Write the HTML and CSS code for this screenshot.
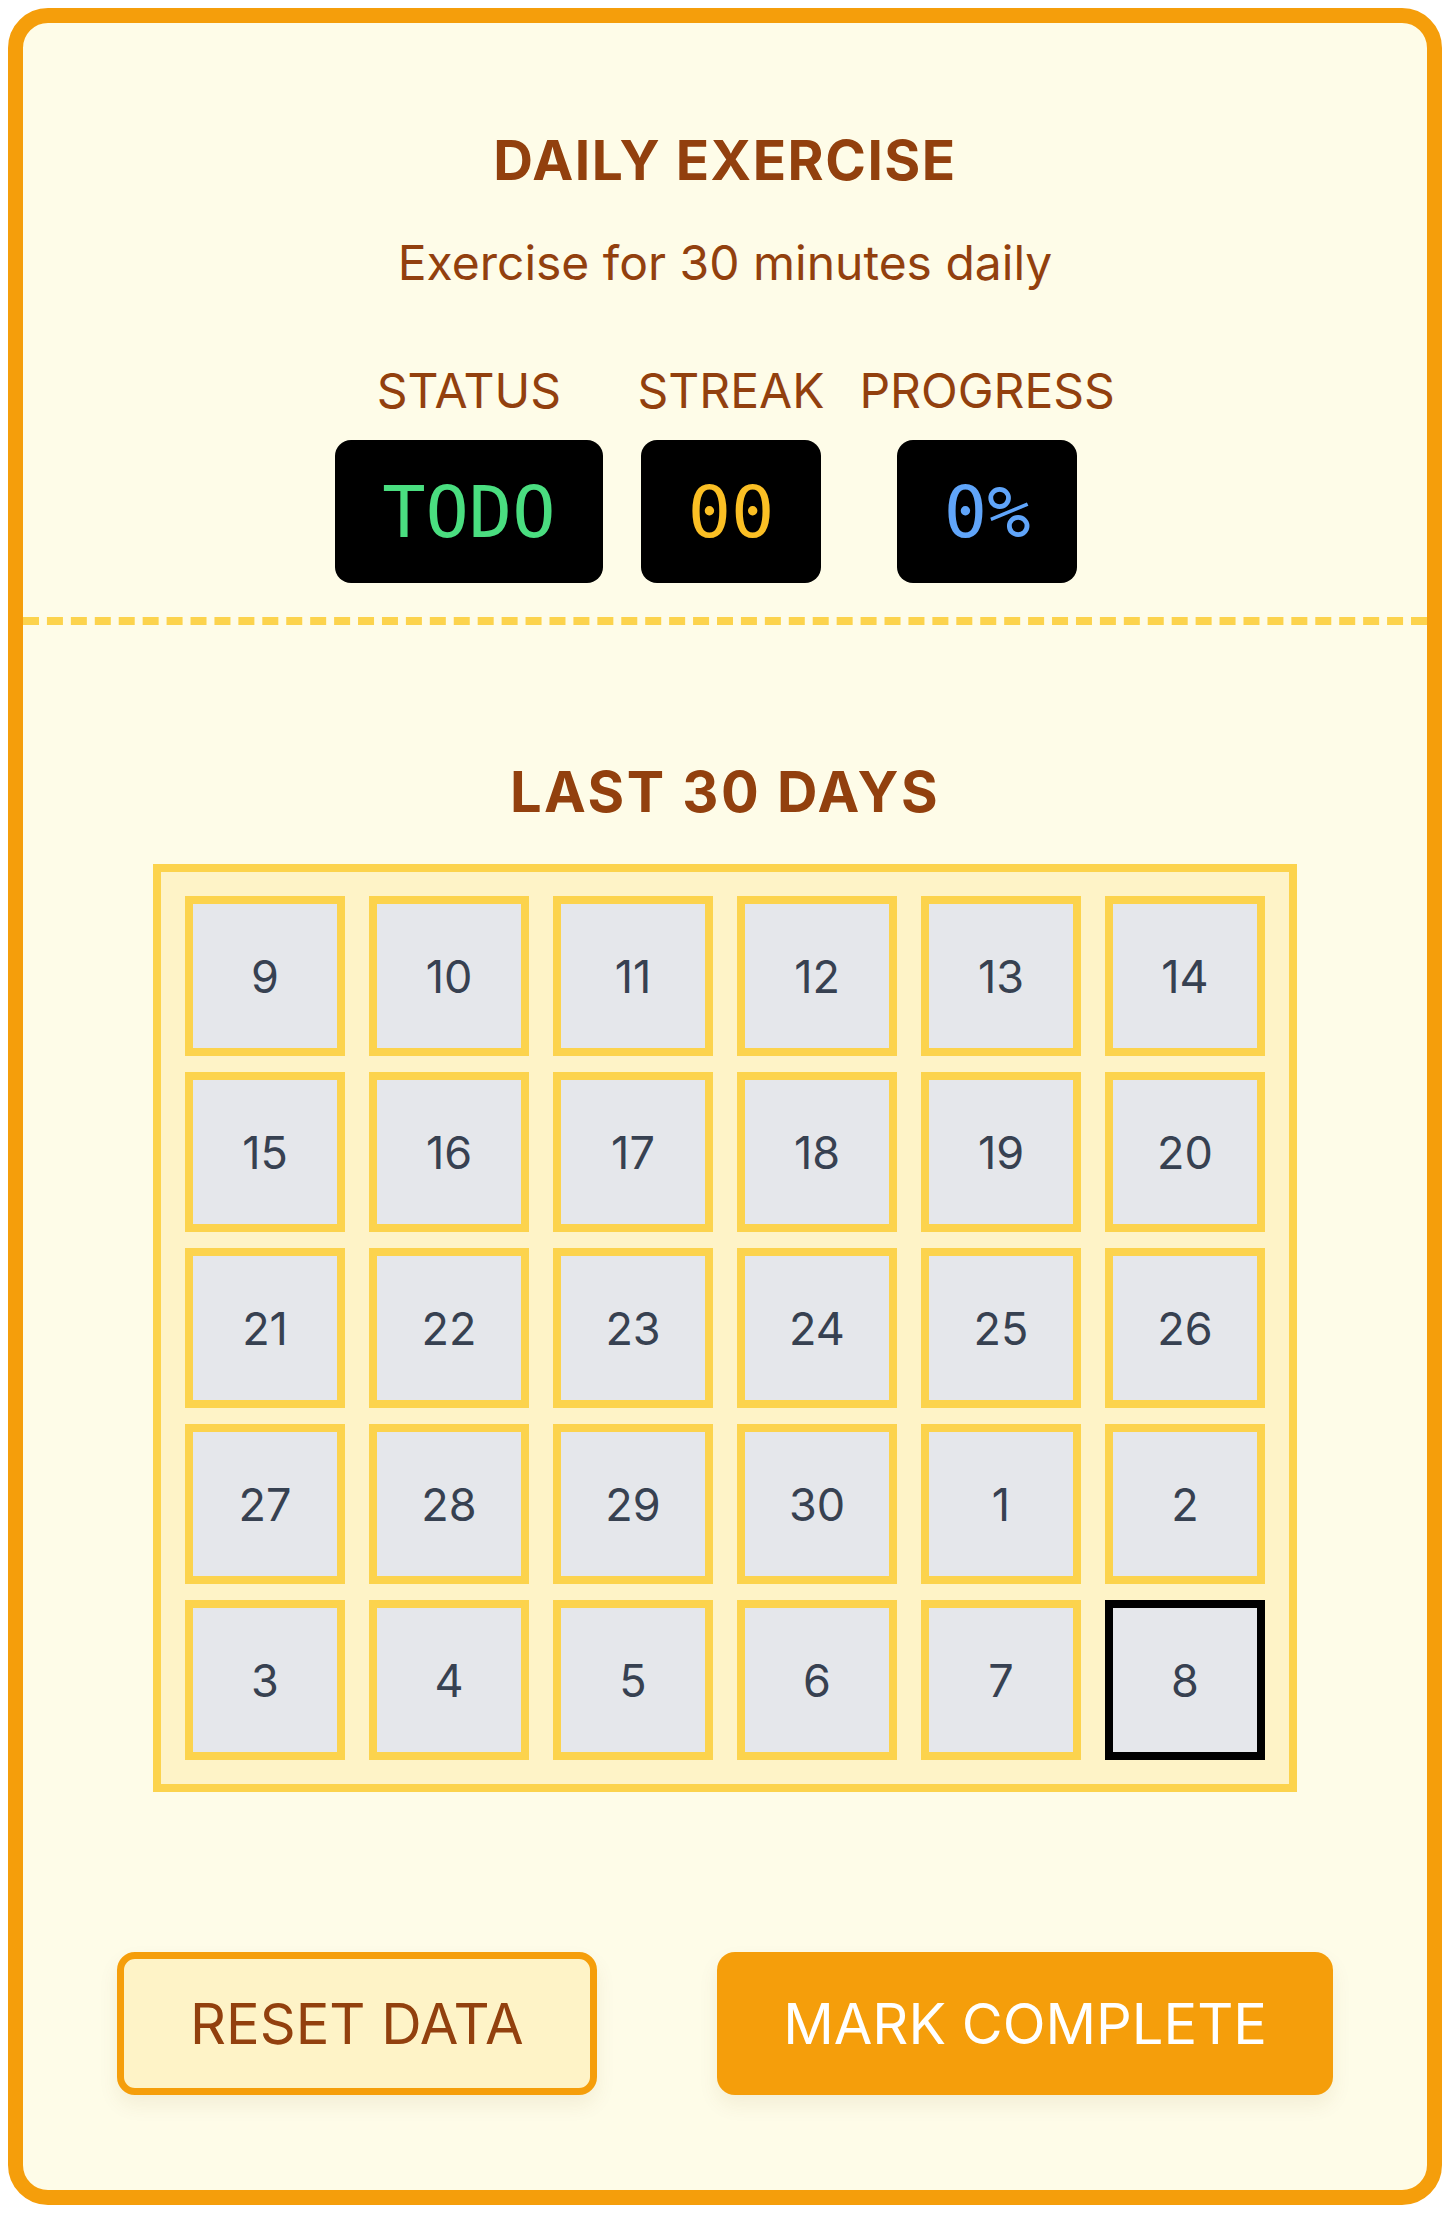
FILE: index.html
```html
<!DOCTYPE html>
<html lang="en">
<head>
<meta charset="utf-8">
<title>Daily Exercise</title>
<link rel="stylesheet" href="styles.css">
</head>
<body>
<div class="card">
  <header class="header">
    <h1 class="title">DAILY EXERCISE</h1>
    <p class="subtitle">Exercise for 30 minutes daily</p>
    <div class="stats">
      <div class="stat">
        <div class="stat-label">STATUS</div>
        <div class="stat-box status">TODO</div>
      </div>
      <div class="stat">
        <div class="stat-label">STREAK</div>
        <div class="stat-box streak">00</div>
      </div>
      <div class="stat">
        <div class="stat-label">PROGRESS</div>
        <div class="stat-box progress">0%</div>
      </div>
    </div>
  </header>
  <section class="history">
    <h2 class="title title-sub">LAST 30 DAYS</h2>
    <div class="grid">
      <div class="day">9</div><div class="day">10</div><div class="day">11</div><div class="day">12</div><div class="day">13</div><div class="day">14</div>
      <div class="day">15</div><div class="day">16</div><div class="day">17</div><div class="day">18</div><div class="day">19</div><div class="day">20</div>
      <div class="day">21</div><div class="day">22</div><div class="day">23</div><div class="day">24</div><div class="day">25</div><div class="day">26</div>
      <div class="day">27</div><div class="day">28</div><div class="day">29</div><div class="day">30</div><div class="day">1</div><div class="day">2</div>
      <div class="day">3</div><div class="day">4</div><div class="day">5</div><div class="day">6</div><div class="day">7</div><div class="day today">8</div>
    </div>
  </section>
  <div class="actions">
    <button class="btn btn-reset">RESET DATA</button>
    <button class="btn btn-complete">MARK COMPLETE</button>
  </div>
</div>
</body>
</html>
```
FILE: styles.css
```css
html, body {
  background: #ffffff;
}
body {
  margin: 8px;
  font-family: Inter, "Noto Sans", sans-serif;
  color: #92400e;
}
.card {
  background: #fefce8;
  border: 15px solid #f59e0b;
  border-radius: 40px;
  height: 2197px;
  box-sizing: border-box;
  display: flex;
  flex-direction: column;
}
.header {
  padding: 104px 0 34px;
  border-bottom: 8px dashed #fcd34d;
  display: flex;
  flex-direction: column;
  align-items: center;
}
.title {
  margin: 0;
  font-size: 55px;
  line-height: 66px;
  font-weight: 700;
  letter-spacing: 1.5px;
  color: #92400e;
  text-align: center;
}
.title-sub {
  font-size: 56px;
  letter-spacing: 2.5px;
}
.subtitle {
  margin: 41px 0 0;
  font-size: 48px;
  line-height: 58px;
  color: #92400e;
}
.stats {
  margin-top: 70px;
  display: flex;
  gap: 35px;
  justify-content: center;
}
.stat {
  display: flex;
  flex-direction: column;
  align-items: center;
  gap: 20px;
}
.stat-label {
  font-size: 48px;
  line-height: 58px;
  color: #92400e;
}
.stat-box {
  background: #000;
  border-radius: 16px;
  padding: 30px 47px 29px;
  font-family: "DejaVu Sans Mono", monospace;
  font-size: 72px;
  line-height: 84px;
}
.status { color: #4ade80; }
.streak { color: #fbbf24; }
.progress { color: #60a5fa; }

.history {
  padding-top: 134px;
  display: flex;
  flex-direction: column;
  align-items: center;
}
.grid {
  margin-top: 39px;
  display: grid;
  grid-template-columns: repeat(6, 160px);
  grid-auto-rows: 160px;
  column-gap: 24px;
  row-gap: 16px;
  padding: 24px;
  background: #fef3c7;
  border: 8px solid #fcd34d;
}
.day {
  box-sizing: border-box;
  border: 8px solid #fcd34d;
  background: #e5e7eb;
  display: flex;
  align-items: center;
  justify-content: center;
  font-size: 45px;
  color: #374151;
}
.day.today {
  border-color: #000;
}
.actions {
  margin-top: 160px;
  padding: 0 94px;
  display: flex;
  justify-content: space-between;
}
.btn {
  font-family: Inter, "Noto Sans", sans-serif;
  font-size: 56px;
  line-height: 66px;
  height: 143px;
  border-radius: 18px;
  box-shadow: 0 10px 20px rgba(120, 80, 0, 0.08);
}
.btn-reset {
  background: #fef3c7;
  color: #92400e;
  border: 7px solid #f59e0b;
  padding: 0 66px;
}
.btn-complete {
  background: #f59e0b;
  color: #ffffff;
  border: none;
  padding: 0 66px;
}
```
